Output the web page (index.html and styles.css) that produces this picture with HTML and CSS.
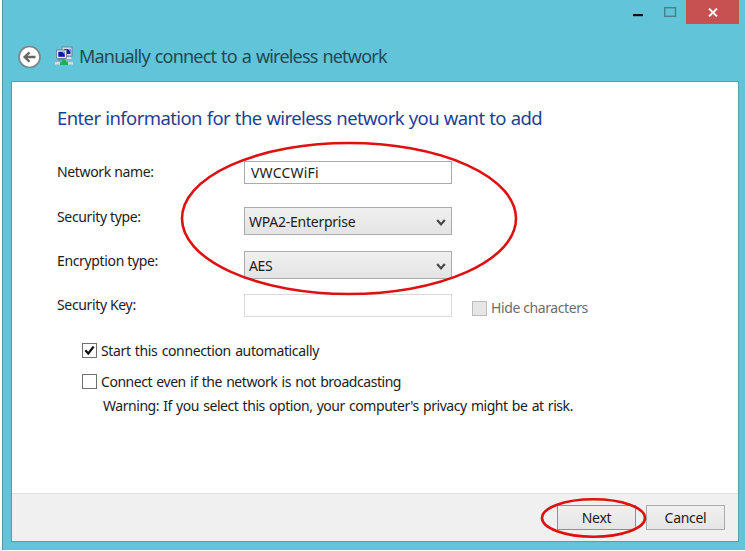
FILE: index.html
```
<!DOCTYPE html>
<html lang="en">
<head>
    <meta charset="UTF-8">
    <meta name="viewport" content="width=device-width, initial-scale=1.0">
    <title>Manually connect to a wireless network</title>
    <link rel="stylesheet" href="styles.css">
</head>
<body>

    <div class="window">
        <div class="controls">
            <svg class="minmax" width="60" height="24" viewBox="0 0 60 24">
                <rect x="7" y="14" width="10" height="2.2" fill="#111"/>
                <rect x="38.7" y="7.7" width="10.8" height="8.6" fill="none" stroke="#47808d" stroke-width="1.4"/>
            </svg>
            <div class="close">
                <svg width="10" height="9" viewBox="0 0 10 9">
                    <path d="M1 .6L9 8.4M9 .6L1 8.4" stroke="#fff" stroke-width="2"/>
                </svg>
            </div>
        </div>

        <div class="title">
            <svg class="back" width="24" height="24" viewBox="0 0 24 24">
                <circle cx="11.5" cy="12" r="10.5" fill="#fff" stroke="#7c8588" stroke-width="1.7"/>
                <path d="M17.5 12H7M11.5 7.3L6.6 12l4.9 4.7" fill="none" stroke="#666" stroke-width="2.3"/>
            </svg>
            <svg class="network" width="18" height="20" viewBox="0 0 18 20">
                <rect x="7" y="1" width="10" height="9" fill="#d5d8ee" stroke="#66758f" stroke-width=".8"/>
                <rect x="9" y="3" width="6.5" height="5" fill="#1420b4"/>
                <path d="M12.5 3h3v2.5z" fill="#8d9df0"/>
                <path d="M10 11h6l.5 2h-6z" fill="#dfe2ef"/>
                <rect x="1.5" y="4" width="10" height="8.5" fill="#e6e8f6" stroke="#66758f" stroke-width=".8"/>
                <rect x="3.3" y="5.8" width="6.5" height="5" fill="#0c13b0"/>
                <path d="M7 5.8h2.8v3z" fill="#8d9df0"/>
                <path d="M3 13h7v1.5H3z" fill="#7386a0"/>
                <rect x="0" y="16" width="18" height="2.6" fill="#c9dfe2"/>
                <path d="M7 14h4v2h2v3H5v-3h2z" fill="#18b060"/>
            </svg>
            <span class="title-text">Manually connect to a wireless network</span>
        </div>

        <div class="content">
            <form class="form">
                <h1>Enter information for the wireless network you want to add</h1>

                <div class="row name">
                    <label>Network name:</label>
                    <div class="box">VWCCWiFi</div>
                </div>
                <div class="row security">
                    <label>Security type:</label>
                    <div class="select">
                        <span class="wpa">WPA2-Enterprise</span>
                        <svg width="10" height="8" viewBox="0 0 10 8"><path d="M1.2 1L5 5.4 8.8 1" fill="none" stroke="#484848" stroke-width="2.2"/></svg>
                    </div>
                </div>
                <div class="row encryption">
                    <label>Encryption type:</label>
                    <div class="select">
                        <span class="aes">AES</span>
                        <svg width="10" height="8" viewBox="0 0 10 8"><path d="M1.2 1L5 5.4 8.8 1" fill="none" stroke="#484848" stroke-width="2.2"/></svg>
                    </div>
                </div>
                <div class="row key">
                    <label>Security Key:</label>
                    <div class="box off"></div>
                    <div class="hide"><i class="check off"></i><span>Hide characters</span></div>
                </div>

                <div class="option auto">
                    <i class="check"><svg width="13" height="13" viewBox="0 0 13 13"><path d="M2.3 6.2l3 3.3L10.6 2.6" fill="none" stroke="#111" stroke-width="2.3"/></svg></i>
                    <span>Start this connection automatically</span>
                </div>
                <div class="option hidden-net">
                    <i class="check"></i>
                    <span>Connect even if the network is not broadcasting</span>
                </div>
                <p class="warning">Warning: If you select this option, your computer's privacy might be at risk.</p>
            </form>

            <div class="footer">
                <div class="button next"><span>Next</span></div>
                <div class="button cancel"><span>Cancel</span></div>
            </div>
        </div>

        <!-- red marks over the fields and the Next button -->
        <svg class="marks" width="745" height="551" viewBox="0 0 745 551">
            <ellipse cx="349" cy="218.5" rx="167" ry="75.5"/>
            <ellipse cx="593.5" cy="518" rx="51.5" ry="18.7"/>
        </svg>
    </div>

</body>
</html>
```
FILE: styles.css
```
*{
    box-sizing:border-box;
}

body{
    margin:0;
    background-color:white;
    font-family:"Noto Sans", "Open Sans", sans-serif;
    font-size:14px;
    color:#1c1c1c;
    overflow:hidden;
}

.window{
    position:relative;
    display:flex;
    flex-direction:column;
    height:550px;
    margin-left:2px;
    padding:0 6px 8px 8px;
    border-left:1px solid #5199a9;
    background-color:#62c4d8;
}

/* title bar */
.controls{
    display:flex;
    justify-content:flex-end;
    height:24px;
}

.close{
    display:flex;
    align-items:center;
    justify-content:center;
    width:53px;
    height:24px;
    background-color:#c75050;
}

.title{
    display:flex;
    align-items:center;
    height:57px;
    padding:9px 0 0 7px;
    white-space:nowrap;
}

.network{
    margin:-2px 0 0 13px;
}

.title-text{
    margin:-2px 0 0 6px;
    font-size:18px;
    letter-spacing:-0.8px;
    word-spacing:1px;
    color:#1f4a56;
}

.content{
    display:flex;
    flex-direction:column;
    flex:1;
    border:1px solid #539fae;
    background-color:white;
}

/* form */
.form{
    flex:1;
    padding:23px 0 0 45px;
    white-space:nowrap;
}

h1{
    height:26px;
    margin:0 0 30px;
    font-size:18.5px;
    font-weight:normal;
    line-height:26px;
    letter-spacing:-0.6px;
    word-spacing:0.6px;
    color:#1f3f94;
}

.row{
    display:flex;
    align-items:flex-start;
    letter-spacing:-0.35px;
}

.row label{
    width:187px;
    line-height:20px;
}

.name{
    height:46px;
}

.name label, .key label{
    padding-top:1px;
}

.name .box{
    letter-spacing:0.2px;
}

.security{
    height:44px;
}

.encryption{
    height:43px;
}

.key{
    height:46px;
}

.box, .select{
    width:208px;
    border:1px solid #ababab;
}

.box{
    height:23px;
    padding-left:6px;
    line-height:21px;
}

.box.off{
    border-color:#d9d9d9;
}

.select{
    display:flex;
    align-items:center;
    justify-content:space-between;
    height:28px;
    padding:0 5px 0 4px;
    background:linear-gradient(#f0f0f0, #e4e4e4);
}

.select svg{
    margin-top:3px;
}

.wpa{
    letter-spacing:-0.25px;
}

.hide{
    display:flex;
    align-items:center;
    gap:4px;
    margin:4px 0 0 20px;
    line-height:20px;
    letter-spacing:-0.4px;
    color:#6d6d6d;
}

.check{
    display:flex;
    flex:none;
    width:15px;
    height:15px;
    border:1px solid #707070;
    background-color:white;
}

.check.off{
    border-color:#bcbcbc;
    background-color:#e6e6e6;
}

.option{
    display:flex;
    align-items:center;
    gap:4px;
    height:20px;
    margin-left:25px;
    letter-spacing:-0.45px;
    word-spacing:1px;
}

.auto{
    letter-spacing:-0.37px;
}

.hidden-net{
    margin-top:11px;
}

.warning{
    margin:5px 0 0 46px;
    line-height:20px;
    letter-spacing:-0.45px;
    word-spacing:1px;
}

/* buttons */
.footer{
    display:flex;
    justify-content:flex-end;
    gap:10px;
    height:48px;
    padding:11px 13px 0 0;
    border-top:1px solid #dfdfdf;
    background-color:#f0f0f0;
}

.button{
    width:79px;
    height:25px;
    border:1px solid #acacac;
    background:linear-gradient(#f0f0f0, #e5e5e5);
    text-align:center;
    line-height:23px;
    letter-spacing:-0.3px;
}

.next{
    border-color:#569de5;
}

.marks{
    position:absolute;
    top:0;
    left:-3px;
    fill:none;
    stroke:#dd1111;
    stroke-width:2.6;
}
```
